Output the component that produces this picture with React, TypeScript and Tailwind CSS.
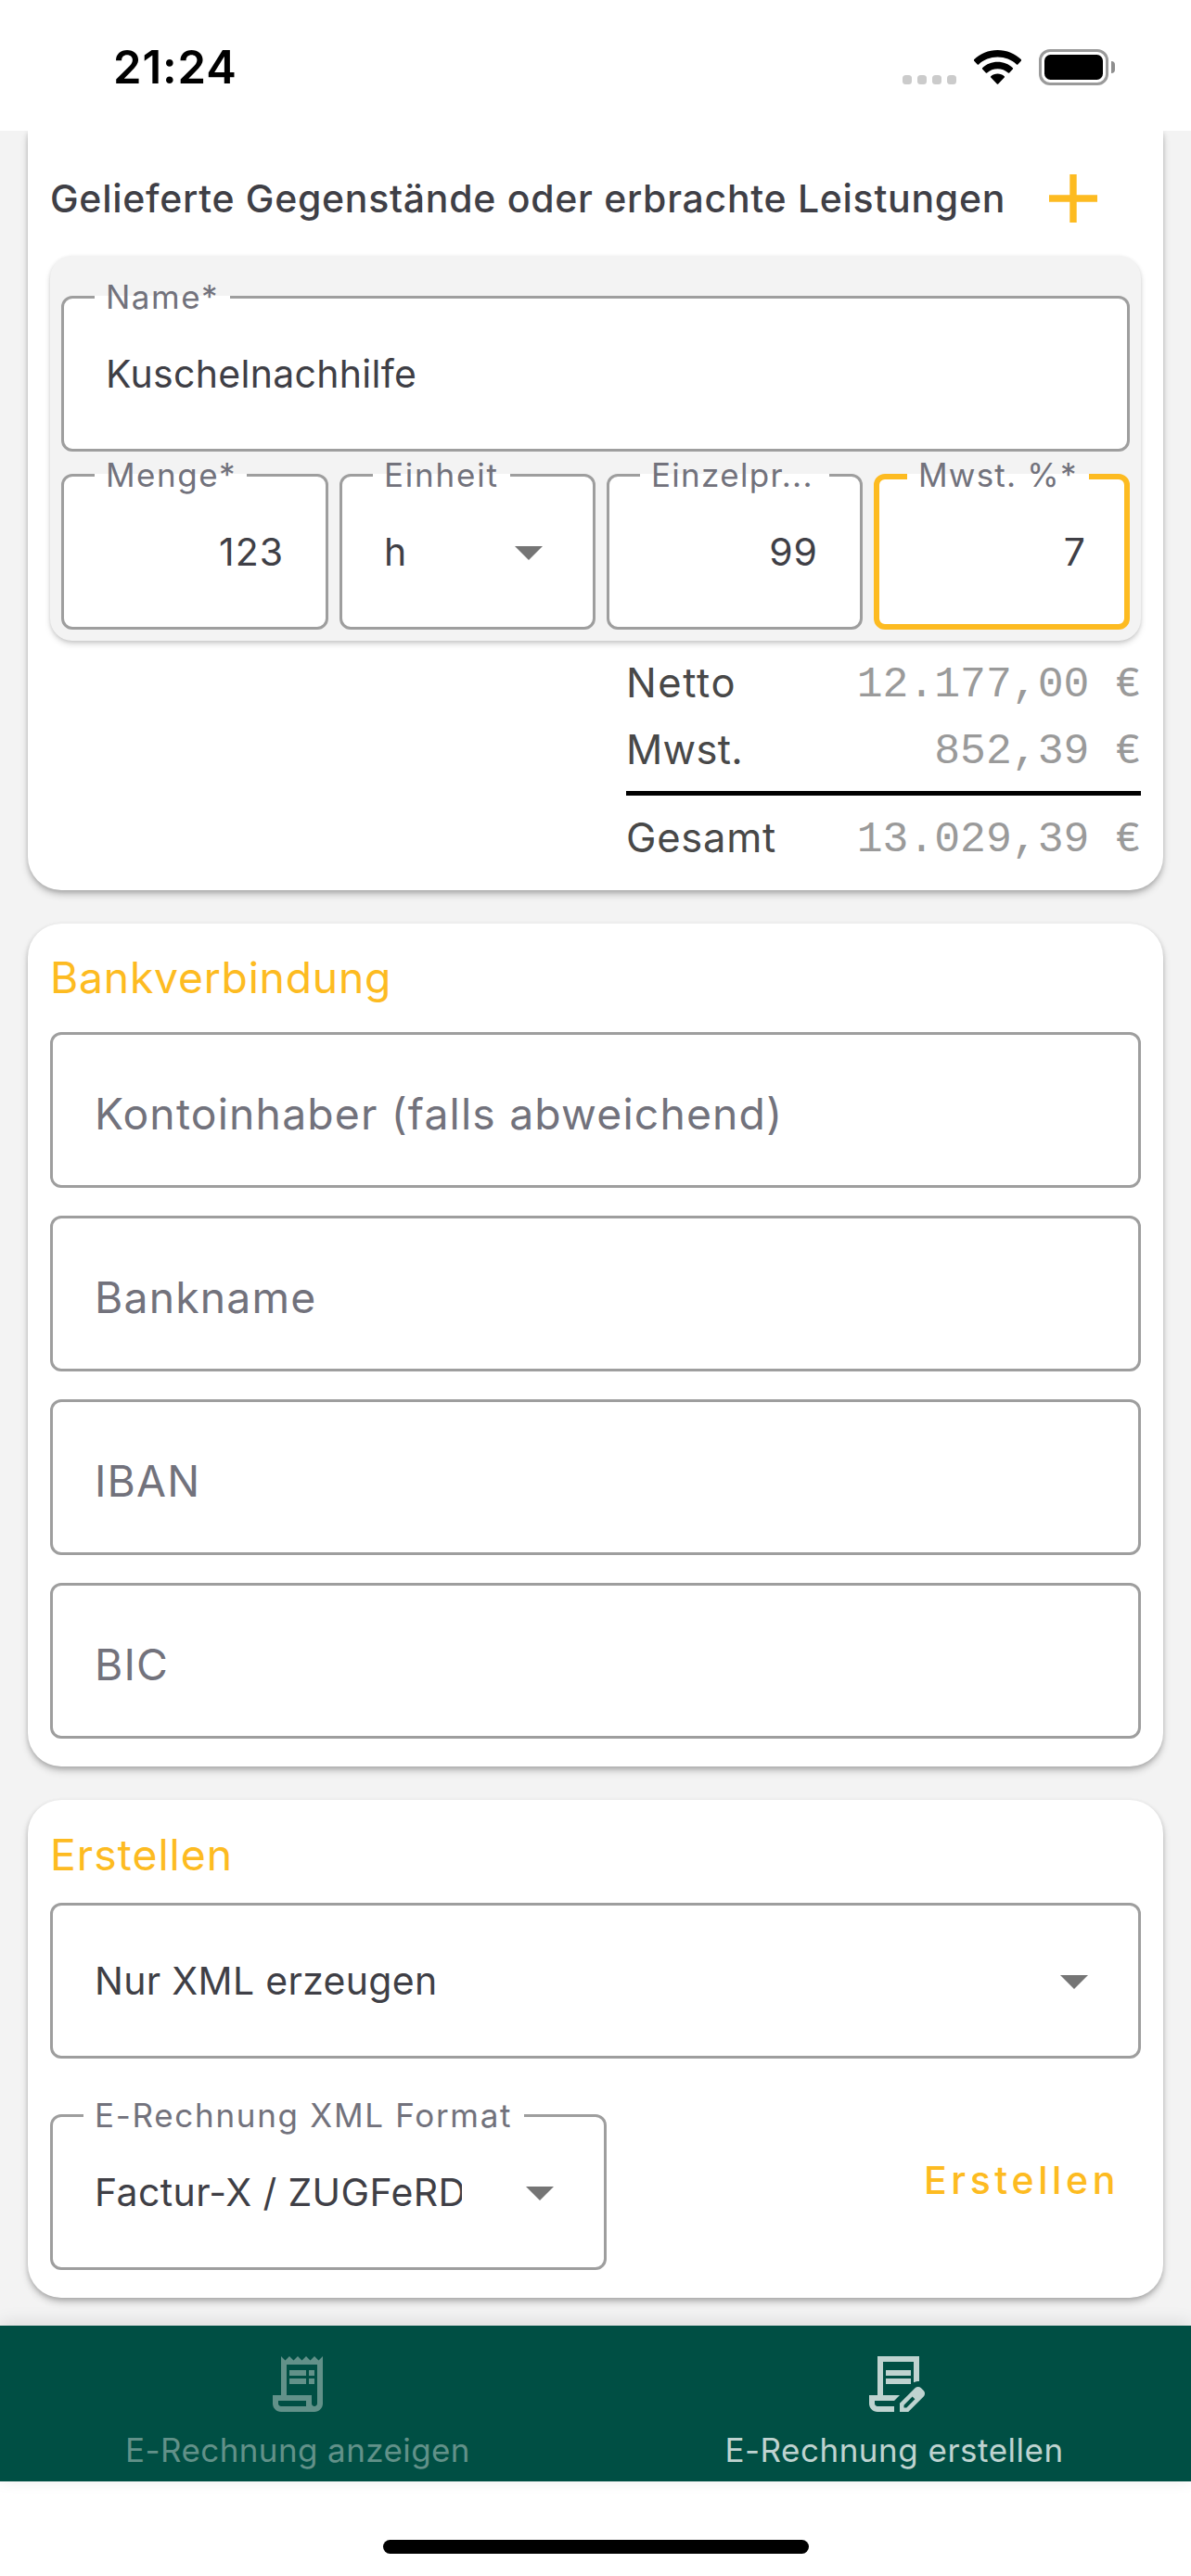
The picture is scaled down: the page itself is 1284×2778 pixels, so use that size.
import type { ReactNode } from 'react'

const CARD_SHADOW =
  'shadow-[0_5px_8px_-1px_rgba(0,0,0,0.24),0_2px_5px_rgba(0,0,0,0.14)]'

function Arrow() {
  return (
    <svg viewBox="0 0 30 15" className="h-[15px] w-[30px] shrink-0 fill-[#757575]">
      <path d="M0 0h30L15 15z" />
    </svg>
  )
}

type FieldProps = {
  label?: string
  labelClass?: string
  notch?: string
  focused?: boolean
  className?: string
  children: ReactNode
}

function Field({ label, labelClass = 'tracking-[1.5px]', notch = '', focused, className = '', children }: FieldProps) {
  return (
    <div
      className={`relative flex h-[168px] items-center rounded-[12px] bg-white pt-[2px] text-[41px] text-[#3f3f46] ${
        focused ? 'border-[6px] border-[#fdbb21] px-[42px]' : 'border-[3px] border-[#9e9e9e] px-[45px]'
      } ${className}`}
    >
      {label && (
        <div
          className={`absolute ${notch} ${
            focused ? '-top-[6px] left-[30px] h-[6px]' : '-top-[3px] left-[33px] h-[3px]'
          } bg-white`}
        >
          <span
            className={`absolute -top-[21px] left-[12px] text-[35px] leading-[44px] whitespace-nowrap text-[#72727c] ${labelClass}`}
          >
            {label}
          </span>
        </div>
      )}
      {children}
    </div>
  )
}

function Placeholder({ text }: { text: string }) {
  return (
    <Field>
      <span className="pt-[6px] text-[46.3px] leading-none tracking-[1.17px] text-[#72727c]">{text}</span>
    </Field>
  )
}

function TotalRow({ label, value, labelClass = 'tracking-[0.75px]' }: { label: string; value: string; labelClass?: string }) {
  return (
    <div className="flex h-[72px] items-center justify-between">
      <span className={`pt-[2px] text-[43.5px] text-[#484848] ${labelClass}`}>{label}</span>
      <span className="pt-[6px] font-['Liberation_Mono',monospace] text-[46.4px] whitespace-pre text-[#9a9a9a]">{value}</span>
    </div>
  )
}

function StatusBar() {
  return (
    <header className="flex h-[141px] shrink-0 items-start justify-between bg-white pr-[82px] pl-[122px]">
      <span className="mt-[48px] text-[49px] leading-[50px] font-semibold tracking-[0.9px] text-black">21:24</span>
      <div className="mt-[53px] flex items-start">
        <div className="mt-[28px] flex gap-[6px]">
          {[0, 1, 2, 3].map((i) => (
            <span key={i} className="size-[10px] rounded-[3.5px] bg-[#cbcbcb]" />
          ))}
        </div>
        <svg viewBox="0 0 51 37" className="mt-px ml-[19px] h-[37px] w-[51px]">
          <path d="M25.5 0C35.4 0 44.400 3.800 51 10.200c.4.400.4 1 0 1.400l-3.700 3.800c-.4.400-1 .4-1.400 0C40.500 10.400 33.300 7.600 25.500 7.600S10.500 10.400 5.100 15.400c-.4.400-1 .4-1.400 0L0 11.600c-.4-.4-.4-1 0-1.400C6.600 3.800 15.600 0 25.500 0z" />
          <path d="M25.500 12.800c6.300 0 12 2.400 16.400 6.400.4.400.4 1 0 1.400l-3.700 3.800c-.4.400-1 .4-1.400 0-3-2.600-7-4.200-11.300-4.200s-8.300 1.600-11.300 4.200c-.4.400-1 .4-1.400 0L9.100 20.600c-.4-.4-.4-1 0-1.400 4.400-4 10.100-6.400 16.400-6.400z" />
          <path d="M25.500 25.600c2.800 0 5.300 1 7.300 2.600.4.400.4 1 0 1.400l-6.600 6.900c-.4.400-1 .4-1.400 0l-6.600-6.900c-.4-.4-.4-1 0-1.400 2-1.600 4.500-2.600 7.300-2.600z" />
        </svg>
        <div className="ml-[19px] flex items-center">
          <div className="h-[39px] w-[75px] rounded-[12px] border-[3px] border-[#9a9a9a] p-[3px]">
            <div className="h-full w-full rounded-[6.5px] bg-black" />
          </div>
          <div className="ml-[3px] h-[13px] w-[4px] rounded-r-full bg-[#8e8e8e]" />
        </div>
      </div>
    </header>
  )
}

export default function App() {
  return (
    <div className="flex h-[2778px] w-[1284px] flex-col overflow-hidden bg-white font-['Inter',sans-serif]">
      <StatusBar />

      <main className="flex h-[2367px] shrink-0 flex-col overflow-hidden bg-[#f3f3f3] px-[30px]">
        <section className={`h-[819px] shrink-0 rounded-b-[36px] bg-white px-[24px] ${CARD_SHADOW}`}>
          <div className="flex h-[135px] items-center justify-between pt-[11px] pr-[47px]">
            <h2 className="pt-[2px] text-[41px] font-medium tracking-[0.7px] whitespace-nowrap text-[#3f3f46]">
              Gelieferte Gegenstände oder erbrachte Leistungen
            </h2>
            <svg viewBox="0 0 52 52" className="size-[52px] shrink-0 fill-[#fdbb21]">
              <path d="M22.300 0h7.400v22.300H52v7.400H29.700V52h-7.400V29.700H0v-7.400h22.300z" />
            </svg>
          </div>

          <div className="flex h-[415px] flex-col gap-[24px] rounded-[24px] bg-[#f3f3f3] px-[12px] pt-[43px] shadow-[0_4px_7px_-1px_rgba(0,0,0,0.18),0_1px_4px_rgba(0,0,0,0.1)]">
            <Field label="Name*" notch="w-[146px]" className="tracking-[0.3px]">Kuschelnachhilfe</Field>
            <div className="grid grid-cols-[288px_276px_276px_276px] gap-[12px]">
              <Field label="Menge*" notch="w-[164px]" className="justify-end tracking-[1px]">123</Field>
              <Field label="Einheit" notch="w-[148px]" labelClass="tracking-[1.8px]" className="justify-between">
                h
                <span className="mr-[9px] flex">
                  <Arrow />
                </span>
              </Field>
              <Field label="Einzelpr..." notch="w-[204px]" labelClass="tracking-[1.3px]" className="justify-end tracking-[1px]">99</Field>
              <Field label="Mwst. %*" notch="w-[196px]" labelClass="tracking-[1.2px]" focused className="justify-end">7</Field>
            </div>
          </div>

          <div className="mt-[9px] ml-auto w-[555px]">
            <TotalRow label="Netto" value="12.177,00 €" labelClass="tracking-[1.6px]" />
            <TotalRow label="Mwst." value="852,39 €" labelClass="tracking-[0.3px]" />
            <div className="my-[9px] h-[5px] bg-black" />
            <TotalRow label="Gesamt" value="13.029,39 €" />
          </div>
        </section>

        <section className={`mt-[36px] h-[909px] shrink-0 rounded-[36px] bg-white px-[24px] ${CARD_SHADOW}`}>
          <h2 className="flex h-[117px] items-center pt-px text-[46.3px] tracking-[0.75px] text-[#fdbb21]">Bankverbindung</h2>
          <div className="flex flex-col gap-[30px]">
            <Placeholder text="Kontoinhaber (falls abweichend)" />
            <Placeholder text="Bankname" />
            <Placeholder text="IBAN" />
            <Placeholder text="BIC" />
          </div>
        </section>

        <section className={`mt-[36px] h-[537px] shrink-0 rounded-[36px] bg-white px-[24px] ${CARD_SHADOW}`}>
          <h2 className="flex h-[111px] items-center pt-[9px] text-[46.3px] tracking-[1px] text-[#fdbb21]">Erstellen</h2>
          <Field className="justify-between tracking-[0.3px]">
            Nur XML erzeugen
            <span className="mr-[9px] flex">
              <Arrow />
            </span>
          </Field>
          <div className="mt-[60px] flex items-center justify-between">
            <Field
              label="E-Rechnung XML Format"
              notch="w-[475px]"
              labelClass="tracking-[1.7px]"
              className="w-[600px] justify-between tracking-[0.37px]"
            >
              <span className="w-[396px] overflow-hidden whitespace-nowrap">Factur-X / ZUGFeRD</span>
              <span className="mr-[9px] flex">
                <Arrow />
              </span>
            </Field>
            <button className="mr-[23px] pb-[24px] text-[41px] font-medium tracking-[4.6px] text-[#fdbb21]">Erstellen</button>
          </div>
        </section>
      </main>

      <nav className="z-10 grid h-[168px] shrink-0 grid-cols-2 bg-[#004f44] shadow-[0_-3px_18px_rgba(0,0,0,0.1)]">
        <div className="flex flex-col items-center pt-[27px] text-[#629189]">
          <svg viewBox="0 0 24 24" className="size-[72px] fill-current">
            <path d="M19.500 3.500 18 2l-1.500 1.500L15 2l-1.500 1.500L12 2l-1.500 1.500L9 2 7.500 3.500 6 2v14H3v3c0 1.660 1.340 3 3 3h12c1.660 0 3-1.340 3-3V2l-1.500 1.500zM15 20H6c-.55 0-1-.45-1-1v-1h10v2zm4-1c0 .55-.45 1-1 1s-1-.45-1-1v-3H8V5h11v14z" />
            <path d="M9 7h6v2H9zM16 7h2v2h-2zM9 10h6v2H9zM16 10h2v2h-2z" />
          </svg>
          <span className="mt-[13px] text-[35px] leading-[44px] tracking-[0.4px]">E-Rechnung anzeigen</span>
        </div>
        <div className="flex flex-col items-center pt-[27px] pl-[2px] text-[#bfd3d0]">
          <svg viewBox="0 0 24 24" className="size-[72px] fill-current">
            <path d="M6 2h15v9c-.7 0-1.400.1-2 .45V4H8v12H6z" />
            <path d="M9 7h9v2H9zM9 10h9v2H9z" />
            <path d="M3 16h11l-2 2H5v1c0 .55.45 1 1 1h6v2H6c-1.660 0-3-1.340-3-3z" />
            <path
              fillRule="evenodd"
              d="M14 22v-3.075l5.525-5.500q.225-.225.5-.325t.55-.1q.3 0 .575.113t.5.337l.925.925q.2.225.313.5t.112.55-.1.563-.325.512l-5.500 5.500zM15.500 20.500h.95l3.025-3.050-.45-.475-.475-.45-3.050 3.025z"
            />
          </svg>
          <span className="mt-[13px] text-[35px] leading-[44px] tracking-[0.5px]">E-Rechnung erstellen</span>
        </div>
      </nav>

      <footer className="flex h-[102px] shrink-0 justify-center bg-white pt-[63px]">
        <div className="h-[15px] w-[459px] rounded-full bg-black" />
      </footer>
    </div>
  )
}
